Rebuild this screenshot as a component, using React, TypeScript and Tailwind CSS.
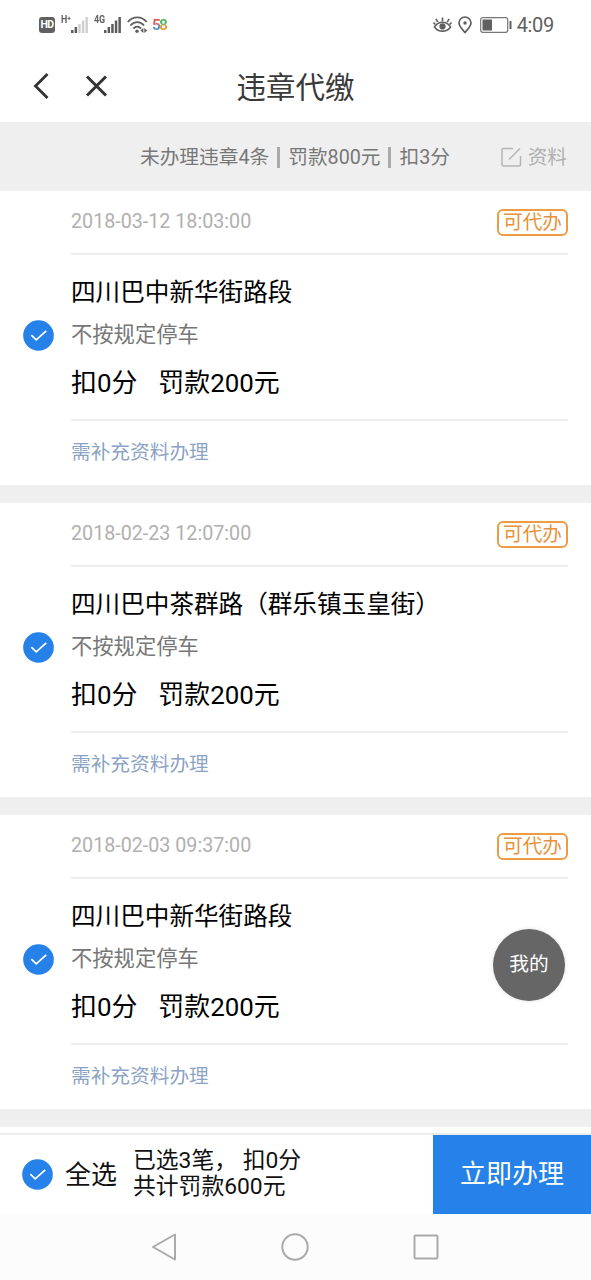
interface Violation {
    time: string
    place: string
    reason: string
    points: number
    fine: number
}

const violations: Violation[] = [
    { time: '2018-03-12 18:03:00', place: '四川巴中新华街路段', reason: '不按规定停车', points: 0, fine: 200 },
    { time: '2018-02-23 12:07:00', place: '四川巴中茶群路（群乐镇玉皇街）', reason: '不按规定停车', points: 0, fine: 200 },
    { time: '2018-02-03 09:37:00', place: '四川巴中新华街路段', reason: '不按规定停车', points: 0, fine: 200 },
]

function CheckCircle({ className }: { className: string }) {
    return (
        <svg viewBox="0 0 32 32" className={className} fill="none">
            <circle cx="16" cy="16" r="15.8" fill="#2681e9" />
            <path d="M8.6 15.7l5 4.8L24 11.3" stroke="#fff" strokeWidth="1.8" />
        </svg>
    )
}

function Signal({ label, strong }: { label: string, strong: number }) {
    const bars = [3, 6, 9, 12.5, 16]
    return (
        <div className="flex h-[19px] items-start">
            <span className="-mt-px w-[10px] origin-left scale-x-[0.85] whitespace-nowrap text-[10.5px] leading-[10px] font-bold">{label}</span>
            <svg viewBox="0 0 18 17" className="h-[17px] w-[18px]">
                {bars.map((h, i) => (
                    <rect key={h} x={i * 3.6} y={17 - h} width="2.5" height={h} fill={i < strong ? '#5c5c5c' : '#d0d0d0'} />
                ))}
            </svg>
        </div>
    )
}

function StatusBar() {
    return (
        <div className="flex h-[50px] items-center justify-between pr-[37px] pl-[39px] text-[#606060]">
            <div className="flex items-center">
                <span className="h-[16px] w-[16px] rounded-[3px] bg-[#606060] text-center text-[10.5px] leading-[16px] font-bold tracking-tighter text-white">HD</span>
                <div className="ml-[6px]"><Signal label="H⁺" strong={2} /></div>
                <div className="ml-[5px]"><Signal label="4G" strong={5} /></div>
                <svg viewBox="0 0 21 18" className="ml-[5px] h-[18px] w-[21px]" fill="none" stroke="#606060" strokeWidth="1.9">
                    <path d="M.8 6C6 -.2 14.5 -.2 19.7 6" />
                    <path d="M3.5 9.5c3.8-4.5 9.7-4.5 13.5 0" />
                    <path d="M6.4 12.6c2.2-2.6 5.4-2.6 7.6 0" />
                    <circle cx="10" cy="15.3" r="1.7" fill="#606060" stroke="none" />
                    <path d="M16.4 12v5l-3-2.5zM17.3 12v5l3-2.5z" fill="#606060" stroke="none" />
                </svg>
                <span className="ml-[4px] text-[15.5px] leading-[18px] font-bold tracking-[-1.8px]">
                    <span className="bg-linear-to-b from-[#e05b55] from-40% to-[#4b92cf] to-60% bg-clip-text pr-[2px] text-transparent">5</span>
                    <span className="-ml-[2px] bg-linear-to-b from-[#4fb66f] from-40% to-[#ec9c3b] to-60% bg-clip-text pr-[2px] text-transparent">8</span>
                </span>
            </div>
            <div className="flex items-center">
                <svg viewBox="0 0 20 18" className="h-[18px] w-[19px]" fill="none" stroke="#606060" strokeWidth="1.7">
                    <path d="M1.5 11c4.5-6.5 12.5-6.5 17 0-4.5 6-12.5 6-17 0z" />
                    <circle cx="10" cy="10.5" r="3.3" fill="#606060" stroke="none" />
                    <path d="M10 5V1M5 6L3 2.5M15 6l2-3.5M2.5 8.5L.5 6.5M17.5 8.5l2-2" />
                </svg>
                <svg viewBox="0 0 14 18" className="ml-[6px] h-[18px] w-[14px]" fill="none" stroke="#606060" strokeWidth="1.7">
                    <path d="M7 16.5C3.5 12.5 1 10 1 7a6 6 0 0 1 12 0c0 3-2.5 5.5-6 9.5z" />
                    <circle cx="7" cy="7" r="1.7" fill="#606060" stroke="none" />
                </svg>
                <svg viewBox="0 0 32 16" className="ml-[8px] h-[16px] w-[32px]">
                    <rect x=".7" y=".7" width="27" height="14.6" rx="2" fill="none" stroke="#777" strokeWidth="1.2" />
                    <rect x="2.5" y="2.5" width="9.5" height="11" fill="#606060" />
                    <rect x="29.5" y="4" width="2" height="8" fill="#606060" />
                </svg>
                <span className="ml-[5px] text-[20px] leading-[22px] tracking-[-0.3px]">4:09</span>
            </div>
        </div>
    )
}

function ViolationCard({ item }: { item: Violation }) {
    return (
        <div className="flex h-[294px] shrink-0 bg-white px-[23px]">
            <div className="w-[48px] shrink-0 pt-[129px]">
                <CheckCircle className="h-[31px] w-[31px]" />
            </div>
            <div className="flex-1">
                <div className="flex h-[64px] items-center justify-between border-b-2 border-[#ececec]">
                    <span className="pb-[1px] text-[19.7px] text-[#b0b0b0]">{item.time}</span>
                    <span className="h-[27px] w-[71px] rounded-[6px] border-2 border-[#eb9c45] text-center text-[19.7px] leading-[23px] text-[#e8923a]">可代办</span>
                </div>
                <div className="flex h-[166px] flex-col border-b-2 border-[#ececec] pt-[19px]">
                    <div className="text-[24.6px] leading-[38px] whitespace-nowrap text-black">{item.place}</div>
                    <div className="mt-[6px] text-[21.3px] leading-[34px] text-[#777]">{item.reason}</div>
                    <div className="mt-[11px] flex gap-[21px] text-[25.9px] leading-[40px] text-black">
                        <span>扣{item.points}分</span>
                        <span>罚款{item.fine}元</span>
                    </div>
                </div>
                <div className="text-[19.7px] leading-[63px] text-[#8ba4c4]">需补充资料办理</div>
            </div>
        </div>
    )
}

export default function App() {
    const total = violations.reduce((sum, v) => sum + v.fine, 0)
    const points = violations.reduce((sum, v) => sum + v.points, 0)

    return (
        <div className="relative flex h-[1280px] w-[591px] flex-col overflow-hidden bg-white font-[Roboto,'Noto_Sans_CJK_SC',sans-serif]">
            <StatusBar />

            {/* Title bar */}
            <div className="grid h-[72px] shrink-0 grid-cols-[1fr_auto_1fr] items-center">
                <div className="flex items-center gap-[36px] pl-[33px]">
                    <svg viewBox="0 0 16 26" className="h-[26px] w-[16px]" fill="none" stroke="#333" strokeWidth="2.8">
                        <path d="M14.5 1L2.5 13l12 12" />
                    </svg>
                    <svg viewBox="0 0 22 22" className="h-[22px] w-[23px]" fill="none" stroke="#333" strokeWidth="3">
                        <path d="M1.5 1.5l19 19M20.5 1.5l-19 19" />
                    </svg>
                </div>
                <h1 className="pt-[3px] text-[29.5px] leading-[44px] text-[#3a3a3a]">违章代缴</h1>
            </div>

            {/* Summary */}
            <div className="flex h-[69px] shrink-0 items-center justify-between bg-[#efefef] pr-[24px] pl-[140px] text-[19.7px]">
                <div className="flex items-center pt-[2px] text-[#777]">
                    <span>未办理违章4条</span>
                    <span className="mx-[8px] h-[21px] w-[3px] bg-[#aaa]" />
                    <span>罚款800元</span>
                    <span className="mx-[8px] h-[21px] w-[3px] bg-[#aaa]" />
                    <span>扣3分</span>
                </div>
                <div className="flex items-center gap-[6px] pt-[2px] text-[#b0b0b0]">
                    <svg viewBox="0 0 21 20" className="h-[20px] w-[21px]" fill="none" stroke="#b5b5b5" strokeWidth="1.5">
                        <path d="M12 1.5H2.5a1.5 1.5 0 0 0-1.5 1.5v14.5A1.5 1.5 0 0 0 2.5 19H18a1.5 1.5 0 0 0 1.5-1.5V9M8 12.5L19 1.5" />
                    </svg>
                    <span>资料</span>
                </div>
            </div>

            {/* Violation list */}
            <div className="flex h-[942px] shrink-0 flex-col gap-[18px] overflow-hidden bg-[#efefef]">
                {violations.map(v => <ViolationCard key={v.time} item={v} />)}
                <div className="h-[10px] shrink-0 bg-white" />
            </div>

            {/* Bottom action bar */}
            <div className="flex h-[81px] shrink-0 border-t-2 border-[#ececec] bg-white">
                <div className="flex flex-1 items-center pl-[22px] text-[#111]">
                    <CheckCircle className="h-[31px] w-[31px]" />
                    <span className="ml-[12px] text-[26px] leading-[38px]">全选</span>
                    <div className="ml-[16px] pb-[1px] text-[22.8px] leading-[26px] whitespace-pre">
                        <div>已选{violations.length}笔， 扣{points}分</div>
                        <div>共计罚款{total}元</div>
                    </div>
                </div>
                <button className="w-[158px] bg-[#2681e9] text-[26px] text-white">立即办理</button>
            </div>

            {/* System navigation */}
            <div className="flex flex-1 items-center justify-center gap-[104px] bg-[#fcfcfc] pr-[1px] pb-[1px]">
                <svg viewBox="0 0 26 28" className="h-[28px] w-[26px]" fill="none" stroke="#aaa" strokeWidth="2" strokeLinejoin="round">
                    <path d="M24 1.5v25L2 14z" />
                </svg>
                <svg viewBox="0 0 28 28" className="h-[28px] w-[28px]" fill="none" stroke="#aaa" strokeWidth="2">
                    <circle cx="14" cy="14" r="12.7" />
                </svg>
                <svg viewBox="0 0 26 26" className="h-[26px] w-[26px]" fill="none" stroke="#aaa" strokeWidth="2">
                    <rect x="1.5" y="1.5" width="23" height="23" rx="1" />
                </svg>
            </div>

            {/* Floating shortcut */}
            <button className="absolute top-[929px] left-[493px] h-[72px] w-[72px] rounded-full bg-[#666] pb-[1px] text-[19.7px] text-white shadow-[0_0_4px_rgba(0,0,0,0.12)]">
                我的
            </button>
        </div>
    )
}
